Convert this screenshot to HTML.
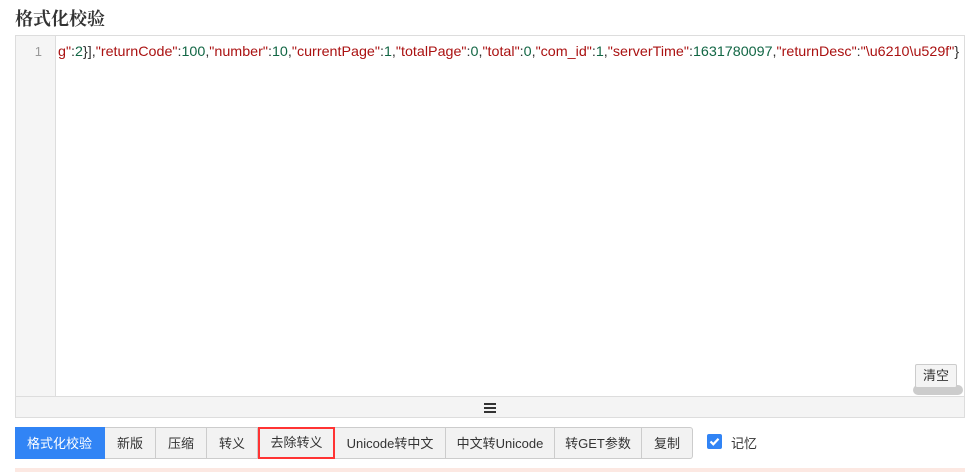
<!DOCTYPE html>
<html><head><meta charset="utf-8"><style>
*{margin:0;padding:0;box-sizing:border-box}
body{width:972px;height:472px;background:#fff;font-family:"Liberation Sans","Noto Sans CJK SC",sans-serif;position:relative;overflow:hidden;color:#333}
.title{position:absolute;left:15px;top:5px;font-size:18px;font-weight:bold;color:#333;font-family:"Liberation Serif","Noto Serif CJK SC",serif}
.ed{position:absolute;left:15px;top:35px;width:950px;height:383px;border:1px solid #ddd}
.gut{position:absolute;left:0;top:0;width:40px;height:360px;background:#f5f5f5;border-right:1px solid #ddd;color:#999;font-size:13px;text-align:right;padding:8px 13px 0 0}
.code{position:absolute;left:42px;top:7px;font-size:14px;white-space:nowrap;transform:scaleX(1.022);transform-origin:left;color:#333}
.s{color:#a11}.n{color:#164}
.bar{position:absolute;left:0;top:360px;width:948px;height:21px;background:#f4f4f4;border-top:1px solid #ddd}
.ham{position:absolute;left:468px;top:6px;width:12px}
.ham i{display:block;height:2px;background:#333;margin-bottom:2px}
.clr{position:absolute;left:899px;top:328px;width:42px;height:24px;border:1px solid #ccc;background:#f4f4f4;font-size:13px;text-align:center;line-height:22px;border-radius:2px}
.clrs{position:absolute;left:897px;top:349px;width:50px;height:10px;background:#ccc;border-radius:5px;z-index:-1}
.btns{position:absolute;left:15px;top:427px;height:32px;display:flex}
.b{height:32px;border:1px solid #ccc;border-left:none;background:#f2f2f2;font-size:13px;line-height:32px;text-align:center;color:#333}
.b.p{background:#3184f5;color:#fff;border-color:#3184f5}
.b.r{outline:2px solid #f33;outline-offset:-2px;border:none;border-bottom:1px solid #ccc}
.cb{position:absolute;left:707px;top:434px;width:15px;height:15px;background:#3184f5;border-radius:2px}
.lbl{position:absolute;left:731px;top:433px;font-size:13px}
.pink{position:absolute;left:15px;top:468px;width:950px;height:4px;background:#fce8e2}
</style></head><body>
<div class="title">格式化校验</div>
<div class="ed">
<div class="gut">1</div>
<div class="code"><span class="s">g"</span>:<span class="n">2</span>}],<span class="s">"returnCode"</span>:<span class="n">100</span>,<span class="s">"number"</span>:<span class="n">10</span>,<span class="s">"currentPage"</span>:<span class="n">1</span>,<span class="s">"totalPage"</span>:<span class="n">0</span>,<span class="s">"total"</span>:<span class="n">0</span>,<span class="s">"com_id"</span>:<span class="n">1</span>,<span class="s">"serverTime"</span>:<span class="n">1631780097</span>,<span class="s">"returnDesc"</span>:<span class="s">"\u6210\u529f"</span>}</div>
<div class="clrs"></div>
<div class="clr">清空</div>
<div class="bar"><div class="ham"><i></i><i></i><i></i></div></div>
</div>
<div class="btns">
<div class="b p" style="width:90px">格式化校验</div>
<div class="b" style="width:51px">新版</div>
<div class="b" style="width:51px">压缩</div>
<div class="b" style="width:51px">转义</div>
<div class="b r" style="width:77px">去除转义</div>
<div class="b" style="width:111px">Unicode转中文</div>
<div class="b" style="width:109px">中文转Unicode</div>
<div class="b" style="width:87px">转GET参数</div>
<div class="b" style="width:51px;border-radius:0 3px 3px 0">复制</div>
</div>
<div class="cb"><svg width="15" height="15" viewBox="0 0 15 15"><path d="M3.5 7.5l2.8 2.8 5.2-5.5" stroke="#fff" stroke-width="2.2" fill="none"/></svg></div>
<div class="lbl">记忆</div>
<div class="pink"></div>
</body></html>
